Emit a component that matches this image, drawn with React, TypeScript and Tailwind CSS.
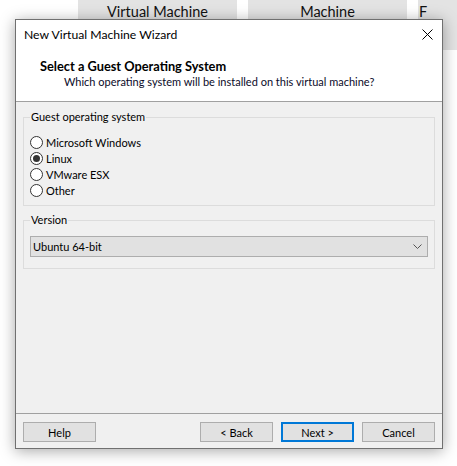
import { ReactNode } from "react";

const font = { fontFamily: 'Lato, "Liberation Sans", sans-serif' };

function Radio({ label, checked = false }: { label: string; checked?: boolean }) {
  return (
    <label className="flex h-[16px] items-center">
      <span className="flex h-[13px] w-[13px] items-center justify-center rounded-full border border-[#333] bg-white">
        {checked && <span className="h-[7px] w-[7px] rounded-full bg-[#333]" />}
      </span>
      <span className="ml-[3px] text-[11px] leading-none text-black">{label}</span>
    </label>
  );
}

function Group({ title, className, children }: { title: string; className?: string; children: ReactNode }) {
  return (
    <fieldset className={`mx-[7px] border border-[#dcdcdc] ${className ?? ""}`}>
      <legend className="px-[1px] text-[11px] leading-[16px] text-black">{title}</legend>
      {children}
    </fieldset>
  );
}

function Button({ children, primary = false, className }: { children: ReactNode; primary?: boolean; className?: string }) {
  return (
    <button
      className={`flex h-[20px] w-[73px] items-center justify-center bg-[#e1e1e1] text-[11px] leading-none text-black ${
        primary ? "border-2 border-[#0078d7]" : "border border-[#adadad]"
      } ${className ?? ""}`}
    >
      {children}
    </button>
  );
}

export default function App() {
  return (
    <div className="relative h-[466px] w-[457px] overflow-hidden bg-white" style={font}>
      {/* Tabs behind the dialog */}
      <div className="absolute left-0 top-0 flex h-[50px] w-full">
        <div className="ml-[78px] flex h-full w-[159px] justify-center bg-[#e3e3e3] pt-[2px] text-[14.5px] leading-[20px] text-[#111]">
          Virtual Machine
        </div>
        <div className="ml-[11px] flex h-full w-[159px] justify-center bg-[#e3e3e3] pt-[2px] text-[14.5px] leading-[20px] text-[#111]">
          Machine
        </div>
        <div className="ml-[11px] flex h-full flex-1 bg-[#e3e3e3] pl-[1px] pt-[2px] text-[14.5px] leading-[20px] text-[#111]">
          F
        </div>
      </div>

      {/* Dialog window */}
      <div className="absolute left-[15px] top-[19px] flex h-[430px] w-[428px] flex-col border border-[#707070] bg-[#f0f0f0] shadow-[0_2px_14px_rgba(0,0,0,0.35)]">
        <div className="bg-white">
          <div className="flex h-[30px] items-center justify-between pl-[8px] pr-[9px]">
            <span className="text-[12.2px] leading-none text-black">New Virtual Machine Wizard</span>
            <svg width="11" height="11" viewBox="0 0 11 11" className="mt-[-1px]">
              <path d="M0.5 0.5 L10.5 10.5 M10.5 0.5 L0.5 10.5" stroke="#000" strokeWidth="1" />
            </svg>
          </div>
          <div className="h-[51px] pl-[24px] pt-[8px]">
            <div className="text-[12.8px] font-bold leading-[16px] text-black">Select a Guest Operating System</div>
            <div className="pl-[24px] text-[11px] leading-[16px] text-[#0a0a28]">
              Which operating system will be installed on this virtual machine?
            </div>
          </div>
        </div>
        <div className="h-px bg-[#a0a0a0]" />

        <div className="flex-1">
          <Group title="Guest operating system" className="mt-[7px] h-[97px] pl-[6px] pt-[9px]">
            <Radio label="Microsoft Windows" />
            <Radio label="Linux" checked />
            <Radio label="VMware ESX" />
            <Radio label="Other" />
          </Group>

          <Group title="Version" className="mt-[6px] h-[57px] px-[6px] pt-[8px]">
            <div className="flex h-[21px] items-center justify-between border border-[#adadad] bg-[#e1e1e1] pl-[2px] pr-[5px]">
              <span className="text-[11px] leading-none text-black">Ubuntu 64-bit</span>
              <svg width="9" height="5" viewBox="0 0 9 5">
                <path d="M0.5 0.5 L4.5 4.5 L8.5 0.5" fill="none" stroke="#555" strokeWidth="1" />
              </svg>
            </div>
          </Group>
        </div>

        <div className="h-px bg-[#a0a0a0]" />
        <div className="flex h-[34px] items-start pl-[7px] pr-[7px] pt-[8px]">
          <Button>Help</Button>
          <div className="flex-1" />
          <Button>&lt; Back</Button>
          <Button primary className="ml-[8px]">
            Next &gt;
          </Button>
          <Button className="ml-[8px]">Cancel</Button>
        </div>
      </div>
    </div>
  );
}
